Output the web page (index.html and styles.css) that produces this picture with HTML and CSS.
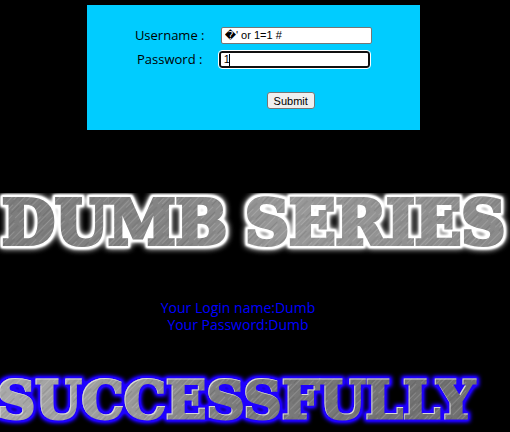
FILE: index.html
```html
<!DOCTYPE html>
<html lang="en">
<head>
<meta charset="utf-8">
<title>Login</title>
<link rel="stylesheet" href="styles.css">
</head>
<body>
<form class="login">
  <div class="row">
    <label for="uname">Username :</label>
    <input class="field" id="uname" type="text" value="&#xFFFD;' or 1=1 #">
  </div>
  <div class="row row-password">
    <label for="passwd">Password :</label>
    <span class="entry"><input class="field field-active" id="passwd" type="text" value="1"><span class="caret"></span></span>
  </div>
  <button class="submit" type="submit">Submit</button>
</form>

<svg class="banner banner-series" role="img" aria-label="Dumb Series">
  <defs>
    <linearGradient id="steel-shade" x1="0" y1="0" x2="540" y2="0" gradientUnits="userSpaceOnUse">
      <stop offset="0" stop-color="#7c7c7c"/>
      <stop offset=".35" stop-color="#858585"/>
      <stop offset=".55" stop-color="#999"/>
      <stop offset="1" stop-color="#888"/>
    </linearGradient>
    <pattern id="brushed" width="37" height="17" patternUnits="userSpaceOnUse" patternTransform="rotate(-45)">
      <path d="M0 1.5h19M12 4.5h21M0 7.5h8M3 10.5h24M20 14.5h17" stroke="#fff" stroke-opacity=".15"/>
      <path d="M21 2.5h14M2 6h20M15 9h19M0 12.5h12M6 16h16" stroke="#000" stroke-opacity=".1"/>
    </pattern>
    <pattern id="steel" x="-10" width="540" height="80" patternUnits="userSpaceOnUse">
      <rect width="540" height="80" fill="url(#steel-shade)"/>
      <rect width="540" height="80" fill="url(#brushed)"/>
    </pattern>
    <filter id="white-glow" filterUnits="userSpaceOnUse" x="-20" y="-10" width="580" height="100" color-interpolation-filters="sRGB">
      <feMorphology in="SourceAlpha" operator="dilate" radius="2" result="wide"/>
      <feGaussianBlur in="wide" stdDeviation="1" result="edge"/>
      <feGaussianBlur in="wide" stdDeviation="3" result="mist"/>
      <feComponentTransfer in="edge" result="rim"><feFuncR type="linear" slope="0" intercept="1"/><feFuncG type="linear" slope="0" intercept="1"/><feFuncB type="linear" slope="0" intercept="1"/><feFuncA type="linear" slope="1.5"/></feComponentTransfer>
      <feComponentTransfer in="mist" result="halo"><feFuncR type="linear" slope="0" intercept="1"/><feFuncG type="linear" slope="0" intercept="1"/><feFuncB type="linear" slope="0" intercept="1"/><feFuncA type="linear" slope="1.4"/></feComponentTransfer>
      <feMerge><feMergeNode in="halo"/><feMergeNode in="rim"/><feMergeNode in="SourceGraphic"/></feMerge>
    </filter>
  </defs>
  <g filter="url(#white-glow)">
    <text class="series-text" y="51"><tspan x="2">DUMB</tspan> <tspan x="245">SERIES</tspan></text>
  </g>
</svg>

<p class="result">Your Login name:Dumb<br>Your Password:Dumb</p>

<svg class="banner banner-success" role="img" aria-label="Successfully">
  <defs>
    <linearGradient id="chrome-shade" x1="0" y1="0" x2="480" y2="0" gradientUnits="userSpaceOnUse">
      <stop offset="0" stop-color="#aaa"/>
      <stop offset=".3" stop-color="#999"/>
      <stop offset=".5" stop-color="#7c7c7c"/>
      <stop offset="1" stop-color="#707070"/>
    </linearGradient>
    <pattern id="chrome" x="-10" width="540" height="80" patternUnits="userSpaceOnUse">
      <rect width="540" height="80" fill="url(#chrome-shade)"/>
      <rect width="540" height="80" fill="url(#brushed)"/>
    </pattern>
    <filter id="blue-glow" filterUnits="userSpaceOnUse" x="-20" y="-10" width="580" height="100" color-interpolation-filters="sRGB">
      <feMorphology in="SourceAlpha" operator="dilate" radius="2" result="wide"/>
      <feGaussianBlur in="wide" stdDeviation="2" result="mist"/>
      <feComponentTransfer in="mist" result="halo"><feFuncR type="linear" slope="0" intercept=".12"/><feFuncG type="linear" slope="0"/><feFuncB type="linear" slope="0" intercept="1"/><feFuncA type="linear" slope="1.7"/></feComponentTransfer>
      <feOffset in="SourceAlpha" dx="1" dy="1" result="lower"/>
      <feComposite in="SourceAlpha" in2="lower" operator="out" result="lip"/>
      <feComponentTransfer in="lip" result="shine"><feFuncR type="linear" slope="0" intercept=".85"/><feFuncG type="linear" slope="0" intercept=".85"/><feFuncB type="linear" slope="0" intercept=".85"/></feComponentTransfer>
      <feMerge><feMergeNode in="halo"/><feMergeNode in="SourceGraphic"/><feMergeNode in="shine"/></feMerge>
    </filter>
  </defs>
  <g filter="url(#blue-glow)">
    <text class="success-text" x="-3" y="47">SUCCESSFULLY</text>
  </g>
</svg>
</body>
</html>
```
FILE: styles.css
```css
* { box-sizing: border-box; }

body {
  margin: 0;
  padding-top: 5px;
  background: #000;
  font-family: "Open Sans", sans-serif;
}

.login {
  width: 65.3%;
  margin: 0 auto 0 17%;
  padding: 20px 48px 21px;
  background: #00ccff;
  font-size: 13px;
}

.row {
  display: grid;
  grid-template-columns: 70px 152px;
  column-gap: 16px;
  align-items: center;
  height: 20px;
  text-align: center;
  white-space: nowrap;
}

.row-password {
  column-gap: 14px;
  margin-top: 4px;
}

.field {
  width: 151px;
  height: 17px;
  display: block;
  padding: 0 3px;
  border: 1px solid #767676;
  border-radius: 2px;
  background: #fff;
  color: #000;
  font: 11px "Liberation Sans", "DejaVu Sans", sans-serif;
}

.entry { position: relative; }

.field-active {
  border: 2px solid #101010;
  border-radius: 3px;
  outline: 1px solid #fff;
}

.caret {
  position: absolute;
  left: 10px;
  top: 3px;
  width: 1px;
  height: 12px;
  background: #000;
}

.submit {
  display: block;
  width: 48px;
  height: 17px;
  margin: 23px 0 0 132px;
  padding: 0;
  border: 1px solid #767676;
  border-radius: 3px;
  background: #efefef;
  color: #000;
  font: 11px "Liberation Sans", sans-serif;
}

.banner {
  display: block;
  width: 100%;
  height: 66px;
  font-family: "DejaVu Serif", serif;
  font-weight: 700;
}

.banner text { stroke-linejoin: miter; }

.banner-series { margin-top: 63px; }

.series-text {
  font-size: 61px;
  fill: url(#steel);
  stroke: url(#steel);
  stroke-width: 4px;
}

.result {
  margin: 40px 0 0;
  padding-right: 34px;
  color: #0000ff;
  font-size: 14px;
  font-weight: 500;
  line-height: 17px;
  text-align: center;
}

.banner-success {
  height: 60px;
  margin-top: 38px;
}

.success-text {
  font-size: 53px;
  fill: url(#chrome);
  stroke: url(#chrome);
  stroke-width: 3px;
}
```
